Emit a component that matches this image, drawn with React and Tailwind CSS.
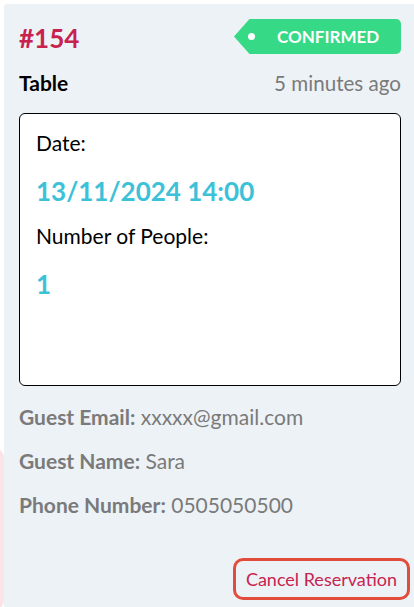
import React from 'react';

const reservation = {
    id: 154,
    status: 'CONFIRMED',
    type: 'Table',
    createdAgo: '5 minutes ago',
    date: '13/11/2024 14:00',
    people: 1,
    email: 'xxxxx@gmail.com',
    name: 'Sara',
    phone: '0505050500',
};

// Tag-shaped status badge with a punched hole
function StatusTag({ label }) {
    return (
        <div className="flex h-[35px] items-stretch">
            <svg width="16" height="35" viewBox="0 0 16 35" className="block">
                <path d="M16 0 L16 35 L15.5 35 L0 17.5 L15.5 0 Z" fill="#36d986" />
            </svg>
            <div className="flex items-center w-[151px] bg-[#36d986] rounded-r-[5px]">
                <span className="w-[7px] h-[7px] rounded-full bg-white -ml-[2px] mr-[22px]" />
                <span className="text-white font-bold text-[17px] leading-none">{label}</span>
            </div>
        </div>
    );
}

export default function App() {
    const r = reservation;

    return (
        <div
            className="relative w-[414px] h-[607px] bg-white overflow-hidden"
            style={{ fontFamily: 'Lato, "Open Sans", sans-serif' }}
        >
            {/* neighbour card peeking on the left */}
            <div className="absolute left-[-20px] top-[449px] w-[24px] h-[160px] rounded-[8px] bg-[#fbe4e8]" />

            <div className="relative ml-[4px] mt-[4px] h-[620px] bg-[#edf2f6] rounded-tl-[3px] pl-[15px] pr-[13px] pt-[16px] flex flex-col">
                {/* header */}
                <div className="flex items-start justify-between">
                    <span className="text-[26px] font-bold leading-[34px] text-[#c8234f] mt-[1px]">#{r.id}</span>
                    <div className="mt-[-1px]">
                        <StatusTag label={r.status} />
                    </div>
                </div>

                <div className="flex items-center justify-between mt-[15px]">
                    <span className="text-[21px] font-bold text-black leading-[26px]">{r.type}</span>
                    <span className="text-[20.6px] text-[#7a7a7a] leading-[26px]">{r.createdAgo}</span>
                </div>

                {/* details box */}
                <div className="mt-[17px] h-[273px] bg-white border border-black rounded-[6px] px-[16px] pt-[16px]">
                    <p className="text-[21px] leading-[26px] text-black">Date:</p>
                    <p className="mt-[19px] text-[26px] font-bold leading-[32px] text-[#3dc1d9]">{r.date}</p>
                    <p className="mt-[16px] text-[21px] leading-[26px] text-black">Number of People:</p>
                    <p className="mt-[19px] text-[26px] font-bold leading-[32px] text-[#3dc1d9]">{r.people}</p>
                </div>

                {/* guest info */}
                <div className="mt-[18px] flex flex-col gap-[18px] text-[21px] leading-[26px] text-[#7a7a7a]">
                    <p><span className="font-bold">Guest Email:</span> {r.email}</p>
                    <p><span className="font-bold">Guest Name:</span> {r.name}</p>
                    <p><span className="font-bold">Phone Number:</span> {r.phone}</p>
                </div>

                <div className="flex justify-end mt-[40px] mr-[-9px]">
                    <button className="h-[42px] px-[10px] border-[3px] border-[#e24c3a] rounded-[10px] text-[18px] text-[#c8234f] leading-none">
                        Cancel Reservation
                    </button>
                </div>
            </div>
        </div>
    );
}
